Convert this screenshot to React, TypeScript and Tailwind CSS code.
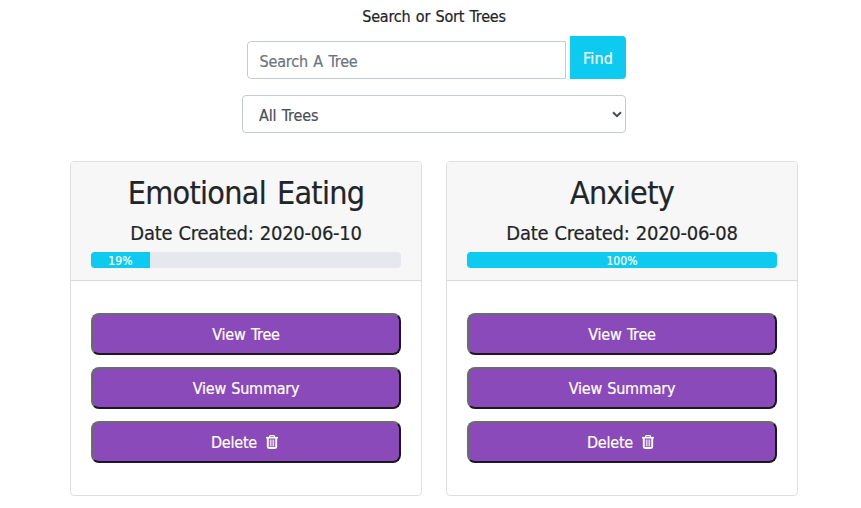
import React from "react";

interface Tree {
  name: string;
  created: string;
  progress: number;
}

const trees: Tree[] = [
  { name: "Emotional Eating", created: "2020-06-10", progress: 19 },
  { name: "Anxiety", created: "2020-06-08", progress: 100 },
];

function TrashIcon() {
  return (
    <svg className="mr-[3px] mb-0.5 ml-[9px] h-[14px] w-[12px] shrink-0" viewBox="0 0 12 14" fill="none" stroke="currentColor">
      <path d="M0 2.7h12" strokeWidth="1.6" />
      <path d="M3.6 2.5V1.5q0-.8.8-.8h3.2q.8 0 .8.8v1" strokeWidth="1.3" />
      <path d="M1.8 3v8.8q0 1.2 1.2 1.2h6q1.2 0 1.2-1.2V3" strokeWidth="1.9" />
      <path d="M4.3 4.5v7M6 4.5v7M7.7 4.5v7" strokeWidth=".9" />
    </svg>
  );
}

function ActionButton({ children }: { children: React.ReactNode }) {
  return (
    <button className="flex h-[42px] w-full items-center justify-center rounded-lg border-2 border-t-[#6b6b6b] border-l-[#6b6b6b] border-r-[#1c1722] border-b-[#1c1722] bg-[#8a4aba] pt-0.5 text-base tracking-[-0.22px] text-white [word-spacing:1px]">
      {children}
    </button>
  );
}

function TreeCard({ tree }: { tree: Tree }) {
  return (
    <article className="h-[335px] w-[352px] rounded border border-[#dfdfdf] bg-white">
      <header className="h-[119px] rounded-t-[3px] border-b border-[#d9d9d9] bg-[#f7f7f7] px-5 pt-3 text-center">
        <h2 className="mb-[9px] text-[32px] leading-[38px] tracking-[-0.7px] [word-spacing:2.5px]">{tree.name}</h2>
        <h5 className="mb-[7px] text-xl leading-6 tracking-[-0.27px] [word-spacing:0.8px]">Date Created: {tree.created}</h5>
        <div className="h-4 overflow-hidden rounded bg-[#e5e9ee]">
          <div
            className="flex h-full items-center justify-center bg-[#0dcaf0] text-xs leading-none tracking-[0.05px] text-white"
            style={{ width: `${tree.progress}%` }}
          >
            <span className="pt-0.5">{tree.progress}%</span>
          </div>
        </div>
      </header>
      <div className="flex flex-col gap-3 px-5 pt-8">
        <ActionButton>View Tree</ActionButton>
        <ActionButton>View Summary</ActionButton>
        <ActionButton>
          Delete
          <TrashIcon />
        </ActionButton>
      </div>
    </article>
  );
}

export default function App() {
  return (
    <main className="h-[508px] overflow-hidden bg-white pt-[5px] font-['DejaVu_Sans_Condensed','DejaVu_Sans',sans-serif] [font-stretch:condensed] text-[#212529] [-webkit-text-stroke:0.2px]">
      <form className="ml-[242px] w-[384px]">
        <p className="text-center text-base leading-6 tracking-[-0.2px] [word-spacing:1px]">Search or Sort Trees</p>
        <div className="mt-[7px] ml-[5px] flex h-[43px] items-end gap-1">
          <input
            className="h-[38px] w-[319px] rounded-l border border-[#c6cbd1] bg-white pr-3 pl-[11.5px] pt-0.5 text-base tracking-[-0.16px] outline-none [word-spacing:1px] placeholder:text-[#6c757d]"
            placeholder="Search A Tree"
          />
          <button type="button" className="h-[43px] w-[56px] rounded-r bg-[#0dcaf0] pt-0.5 text-base tracking-[0.1px] text-white">
            Find
          </button>
        </div>
        <div className="mt-4 grid h-[38px] grid-cols-1 items-center rounded border border-[#c6cbd1]">
          <select className="col-start-1 row-start-1 h-full w-full appearance-none bg-transparent px-4 pt-[3px] text-base tracking-[-0.15px] text-[#495057] outline-none [word-spacing:1px]">
            <option>All Trees</option>
          </select>
          <svg
            className="pointer-events-none col-start-1 row-start-1 mr-[3px] h-[7px] w-[10px] justify-self-end"
            viewBox="0 0 10 7"
            fill="none"
            stroke="#454b51"
            strokeWidth="2"
          >
            <path d="M1 1.2l4 4 4-4" />
          </svg>
        </div>
      </form>
      <section className="mt-7 ml-[70px] flex gap-6">
        {trees.map((tree) => (
          <TreeCard key={tree.name} tree={tree} />
        ))}
      </section>
    </main>
  );
}
